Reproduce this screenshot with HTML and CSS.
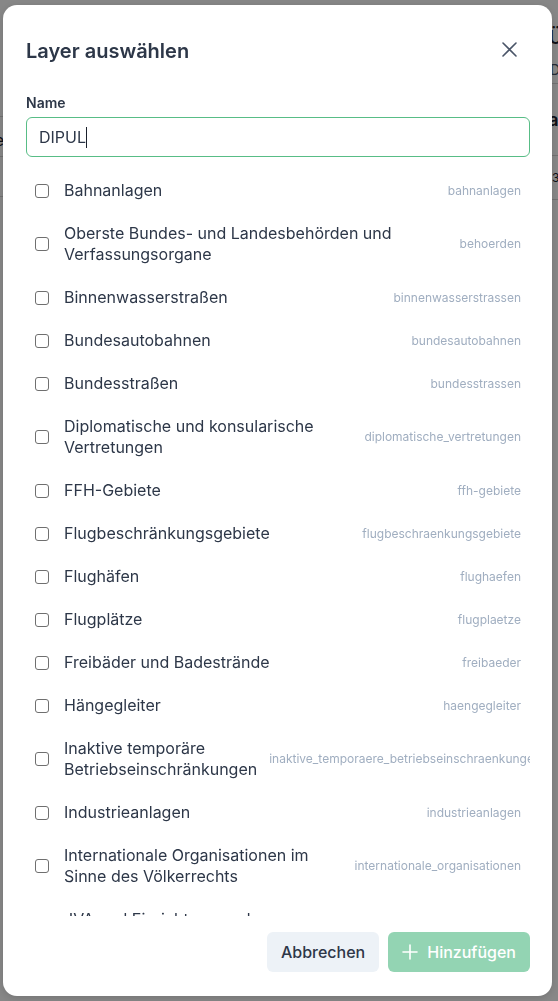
FILE: index.html
```html
<!DOCTYPE html>
<html lang="de">
<head>
<meta charset="utf-8">
<title>Layer auswählen</title>
<link rel="stylesheet" href="styles.css">
</head>
<body>
<div class="page">
  <div class="strip strip-left">
    <div class="bl-space1"></div>
    <div class="bl-cell"><span class="bl-text">Name</span></div>
    <div class="bl-cell2"></div>
  </div>
  <div class="strip strip-right">
    <div class="br-space"></div>
    <div class="br-head">Übersicht</div>
    <div class="br-sub">Details</div>
    <div class="br-row"><span class="br-strong">Status</span></div>
    <div class="br-row2"><span class="br-small">3</span></div>
  </div>
</div>
<div class="backdrop"></div>
<div class="modal" role="dialog" aria-label="Layer auswählen">
  <header class="modal-header">
    <h2 class="modal-title">Layer auswählen</h2>
    <button class="close-btn" type="button" aria-label="Schließen">
      <svg width="15" height="15" viewBox="0 0 15 15" aria-hidden="true"><path d="M1 1L14 14M14 1L1 14" stroke="#4A5568" stroke-width="1.6" stroke-linecap="round"/></svg>
    </button>
  </header>
  <div class="modal-body">
    <div class="field-label">Name</div>
    <div class="input"><span class="input-value">DIPUL</span><span class="caret"></span></div>
    <div class="layer-list">
      <label class="row"><input type="checkbox" class="cb"><span class="row-label">Bahnanlagen</span><span class="slug">bahnanlagen</span></label>
      <label class="row"><input type="checkbox" class="cb"><span class="row-label">Oberste Bundes- und Landesbehörden und Verfassungsorgane</span><span class="slug">behoerden</span></label>
      <label class="row"><input type="checkbox" class="cb"><span class="row-label">Binnenwasserstraßen</span><span class="slug">binnenwasserstrassen</span></label>
      <label class="row"><input type="checkbox" class="cb"><span class="row-label">Bundesautobahnen</span><span class="slug">bundesautobahnen</span></label>
      <label class="row"><input type="checkbox" class="cb"><span class="row-label">Bundesstraßen</span><span class="slug">bundesstrassen</span></label>
      <label class="row"><input type="checkbox" class="cb"><span class="row-label">Diplomatische und konsularische Vertretungen</span><span class="slug">diplomatische_vertretungen</span></label>
      <label class="row"><input type="checkbox" class="cb"><span class="row-label">FFH-Gebiete</span><span class="slug">ffh-gebiete</span></label>
      <label class="row"><input type="checkbox" class="cb"><span class="row-label">Flugbeschränkungsgebiete</span><span class="slug">flugbeschraenkungsgebiete</span></label>
      <label class="row"><input type="checkbox" class="cb"><span class="row-label">Flughäfen</span><span class="slug">flughaefen</span></label>
      <label class="row"><input type="checkbox" class="cb"><span class="row-label">Flugplätze</span><span class="slug">flugplaetze</span></label>
      <label class="row"><input type="checkbox" class="cb"><span class="row-label">Freibäder und Badestrände</span><span class="slug">freibaeder</span></label>
      <label class="row"><input type="checkbox" class="cb"><span class="row-label">Hängegleiter</span><span class="slug">haengegleiter</span></label>
      <label class="row"><input type="checkbox" class="cb"><span class="row-label">Inaktive temporäre Betriebseinschränkungen</span><span class="slug">inaktive_temporaere_betriebseinschraenkungen</span></label>
      <label class="row"><input type="checkbox" class="cb"><span class="row-label">Industrieanlagen</span><span class="slug">industrieanlagen</span></label>
      <label class="row"><input type="checkbox" class="cb"><span class="row-label">Internationale Organisationen im Sinne des Völkerrechts</span><span class="slug">internationale_organisationen</span></label>
      <label class="row"><input type="checkbox" class="cb"><span class="row-label">JVA und Einrichtungen des Maßregelvollzugs</span><span class="slug">justizvollzugsanstalten</span></label>
      <label class="row"><input type="checkbox" class="cb"><span class="row-label">Kontrollzonen</span><span class="slug">kontrollzonen</span></label>
    </div>
  </div>
  <footer class="modal-footer">
    <button class="btn btn-secondary" type="button">Abbrechen</button>
    <button class="btn btn-primary" type="button" disabled>
      <svg width="16" height="16" viewBox="0 0 16 16" aria-hidden="true"><path d="M8 1V15M1 8H15" stroke="#ffffff" stroke-width="1.6" stroke-linecap="round"/></svg>
      <span>Hinzufügen</span>
    </button>
  </footer>
</div>
</body>
</html>
```

FILE: styles.css
```css
* { box-sizing: border-box; }

html, body {
  margin: 0;
  padding: 0;
  height: 100%;
}

body {
  font-family: Inter, "Noto Sans", "Liberation Sans", sans-serif;
  color: #2D3748;
  background: #ffffff;
  overflow: hidden;
}

/* page underneath the modal (only thin strips are visible) */
.page {
  display: flex;
  justify-content: space-between;
  height: 100%;
}

.strip {
  overflow: hidden;
  display: flex;
  flex-direction: column;
}

.strip-left { width: 3px; }
.strip-right { width: 6px; }

.bl-space1 {
  height: 117px;
  border-bottom: 1px solid #d6d6d6;
  flex-shrink: 0;
}

.bl-cell {
  height: 40px;
  border-bottom: 1px solid #d6d6d6;
  display: flex;
  justify-content: flex-end;
  align-items: center;
  flex-shrink: 0;
  padding-top: 6px;
}

.bl-text {
  font-size: 16px;
  color: #1A202C;
  white-space: nowrap;
  flex-shrink: 0;
  margin-right: -1px;
}

.bl-cell2 {
  height: 40px;
  border-bottom: 1px solid #d6d6d6;
  flex-shrink: 0;
}

.br-space { height: 26px; flex-shrink: 0; }

.br-head {
  height: 24px;
  font-size: 18px;
  font-weight: 600;
  line-height: 24px;
  color: #1A202C;
  white-space: nowrap;
  flex-shrink: 0;
  margin-left: -3px;
}

.br-sub {
  height: 34px;
  padding-top: 10px;
  font-size: 14px;
  line-height: 20px;
  color: #4A5568;
  white-space: nowrap;
  border-bottom: 1px solid #d6d6d6;
  flex-shrink: 0;
  margin-left: -2px;
}

.br-row {
  height: 72px;
  display: flex;
  align-items: center;
  border-bottom: 1px solid #d6d6d6;
  flex-shrink: 0;
}

.br-strong {
  font-size: 18px;
  font-weight: 600;
  color: #1A202C;
  margin-left: -22px;
  white-space: nowrap;
}

.br-row2 {
  height: 44px;
  display: flex;
  align-items: center;
  border-bottom: 1px solid #d6d6d6;
  flex-shrink: 0;
}

.br-small {
  font-size: 12px;
  color: #1A202C;
}

.backdrop {
  position: fixed;
  inset: 0;
  background: rgba(0, 0, 0, 0.47);
}

/* modal */
.modal {
  position: fixed;
  left: 3px;
  top: 5px;
  width: 549px;
  height: 991px;
  background: #ffffff;
  border-radius: 14px;
  display: flex;
  flex-direction: column;
  box-shadow: 0 2px 8px rgba(0, 0, 0, 0.15);
}

.modal-header {
  display: flex;
  align-items: center;
  justify-content: space-between;
  padding: 31px 27px 0 23px;
  flex-shrink: 0;
}

.modal-title {
  margin: 0;
  font-size: 20px;
  line-height: 30px;
  font-weight: 600;
  color: #2D3748;
}

.close-btn {
  width: 32px;
  height: 32px;
  padding: 0;
  border: none;
  background: transparent;
  display: flex;
  align-items: center;
  justify-content: center;
  align-self: flex-start;
  margin-top: -3px;
  cursor: pointer;
}

.modal-body {
  flex: 1;
  min-height: 0;
  display: flex;
  flex-direction: column;
  padding: 0 22px 0 23px;
}

.field-label {
  margin-top: 27px;
  font-size: 14px;
  line-height: 20px;
  font-weight: 600;
  color: #2D3748;
}

.input {
  margin-top: 4px;
  height: 40px;
  border: 1px solid #58BD86;
  border-radius: 6px;
  padding: 0 12px;
  display: flex;
  align-items: center;
  font-size: 16px;
  color: #2D3748;
  flex-shrink: 0;
}

.caret {
  width: 1px;
  height: 21px;
  background: #1A202C;
}

.layer-list {
  margin-top: 12px;
  flex: 1;
  min-height: 0;
  overflow: hidden;
}

.row {
  display: flex;
  align-items: center;
  padding: 11px 9px;
  cursor: pointer;
}

.cb {
  appearance: none;
  -webkit-appearance: none;
  width: 14px;
  height: 14px;
  margin: 0 15px 0 0;
  border: 1px solid #6f6f6f;
  border-radius: 3px;
  background: #ffffff;
  flex-shrink: 0;
}

.row-label {
  flex: 1 1 auto;
  font-size: 16px;
  line-height: 21px;
  color: #2D3748;
}

.slug {
  flex-shrink: 0;
  margin-left: 12px;
  font-size: 12px;
  line-height: 16px;
  color: #A0AEC0;
  white-space: nowrap;
}

.modal-footer {
  display: flex;
  justify-content: flex-end;
  gap: 9px;
  padding: 16px 22px 24px 23px;
  flex-shrink: 0;
}

.btn {
  height: 40px;
  border: none;
  border-radius: 6px;
  font-family: inherit;
  font-size: 16px;
  font-weight: 500;
  display: flex;
  align-items: center;
}

.btn-secondary {
  background: #EDF2F7;
  color: #2D3748;
  padding: 0 14px;
}

.btn-primary {
  background: #93D4B3;
  color: #ffffff;
  padding: 0 14px;
  gap: 9px;
}
```
